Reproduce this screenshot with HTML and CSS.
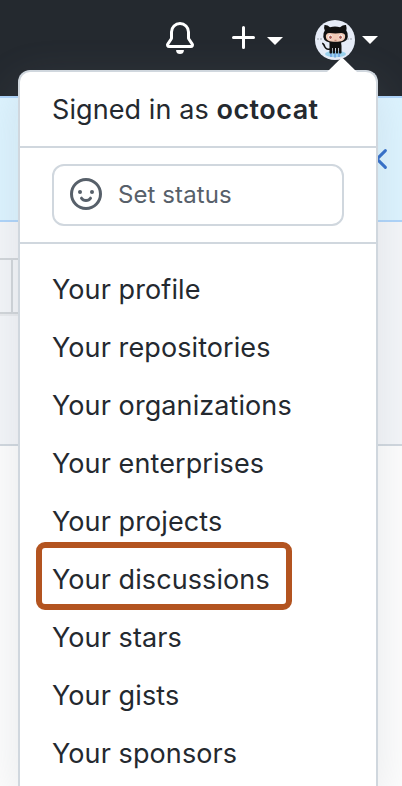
FILE: index.html
```html
<!DOCTYPE html>
<html lang="en">
<head>
<meta charset="utf-8">
<title>User menu</title>
<link rel="stylesheet" href="styles.css">
</head>
<body>
<header class="topbar">
  <svg class="icon bell" viewBox="0 0 16 16"><path d="M8 16a2 2 0 001.985-1.75c.017-.137-.097-.25-.235-.25h-3.5c-.138 0-.252.113-.235.25A2 2 0 008 16z"/><path fill-rule="evenodd" d="M8 1.500A3.500 3.500 0 004.500 5v2.947c0 .346-.102.683-.294.970l-1.703 2.556a.018.018 0 00-.003.010l.001.006c0 .002.002.004.004.006a.017.017 0 00.006.004l.007.001h10.964l.007-.001a.016.016 0 00.006-.004.016.016 0 00.004-.006l.001-.007a.017.017 0 00-.003-.010l-1.703-2.554a1.750 1.750 0 01-.294-.970V5A3.500 3.500 0 008 1.500zM3 5a5 5 0 0110 0v2.947c0 .050.015.098.042.139l1.703 2.555A1.518 1.518 0 0113.482 13H2.518a1.518 1.518 0 01-1.263-2.360l1.703-2.554A.250.250 0 003 7.947V5z"/></svg>
  <svg class="icon plus" viewBox="0 0 16 16"><path d="M7.75 2a.75.75 0 01.75.75V7h4.25a.75.75 0 110 1.500H8.500v4.250a.75.75 0 11-1.500 0V8.500H2.750a.75.75 0 010-1.500H7V2.750A.75.75 0 017.750 2z"/></svg>
  <span class="caret"></span>
  <svg class="avatar" viewBox="0 0 40 40">
    <circle cx="20" cy="20" r="20" fill="#e6ecf7"/>
    <path d="M2 19h6M32 19h6" stroke="#b3b9c4" stroke-width="1.300" stroke-dasharray="2 1"/>
    <ellipse cx="20.500" cy="34" rx="10.500" ry="3.300" fill="#9bd3ee"/>
    <path d="M16 33v4M20 33v4.500M24 33v4" stroke="#75a9e5" stroke-width="1.800"/>
    <path d="M15 29c-4 1-5-1-6-4-.500-1-1-1.500-1.800-1.700" fill="none" stroke="#111" stroke-width="1.700"/>
    <path d="M14.500 22h11.500l.5 4v7q-1.500 1-2.500 0v-5h-.8v5q-1.200 1-2.300 0v-5h-.9v5q-1.200 1-2.300 0v-5h-.7v5q-1.500 1-2.500 0V26z" fill="#111"/>
    <path d="M9.500 5q3-.300 5.500 2.200 5-1.200 10 0Q28 4.700 31 5q1 3 .3 5.500 2 2.500 1.500 6.500-.800 6-12.300 6T8.300 17q-.500-4 1.500-6.500Q8.500 8 9.500 5z" fill="#111"/>
    <path d="M14.500 13q6 .8 12 0c3 .1 4 2 3.600 4-.4 3.500-3.200 4.700-9.600 4.700s-9.200-1.200-9.600-4.700c-.3-2.200.8-3.900 3.600-4z" fill="#f2cbb7"/>
    <ellipse cx="15.300" cy="17" rx="2" ry="2.500" fill="#fff"/>
    <ellipse cx="25.700" cy="17" rx="2" ry="2.500" fill="#fff"/>
    <ellipse cx="15.500" cy="17.200" rx="1.300" ry="1.800" fill="#a85b52"/>
    <ellipse cx="25.500" cy="17.200" rx="1.300" ry="1.800" fill="#a85b52"/>
    <path d="M19.500 20.300h2" stroke="#a85b52" stroke-width=".700"/>
  </svg>
  <span class="caret account-caret"></span>
</header>
<section class="banner">
  <svg class="close" viewBox="0 0 16 16"><path d="M3.800 3.800l8.400 8.400M12.200 3.800l-8.400 8.400"/></svg>
</section>
<section class="subhead"><div class="toolbar"><span class="toolbar-cell"></span></div></section>
<main class="content"></main>

<nav class="menu">
  <svg class="pointer" viewBox="0 0 30 14"><path d="M0 14 13.500.700q1.500-1.200 3 0L30 14z"/></svg>
  <div class="signed-in"><span class="who">Signed in as <strong>octocat</strong></span></div>
  <div class="status">
    <div class="status-box">
      <svg class="smiley" viewBox="0 0 16 16"><circle cx="8" cy="8" r="7.250"/><path d="M5.750 10.100Q6.500 11.250 8 11.250T10.250 10.100"/><circle class="eye" cx="5" cy="7" r="1"/><circle class="eye" cx="11" cy="7" r="1"/></svg>
      <span class="status-label">Set status</span>
    </div>
  </div>
  <div class="links">
    <a class="link"><span>Your profile</span></a>
    <a class="link"><span>Your repositories</span></a>
    <a class="link"><span>Your organizations</span></a>
    <a class="link"><span>Your enterprises</span></a>
    <a class="link"><span>Your projects</span></a>
    <a class="link highlighted"><span>Your discussions</span></a>
    <a class="link"><span>Your stars</span></a>
    <a class="link"><span>Your gists</span></a>
    <a class="link"><span>Your sponsors</span></a>
  </div>
</nav>
</body>
</html>
```
FILE: styles.css
```css
*, *::before, *::after { box-sizing: border-box; }
body {
  margin: 0;
  height: 786px;
  position: relative;
  overflow: hidden;
  display: flex;
  flex-direction: column;
  background: #fdfdfd;
  font-family: Inter, "Liberation Sans", sans-serif;
  font-size: 27px;
  font-weight: 420;
  letter-spacing: .09px;
  color: #24292f;
}
.topbar {
  flex: 0 0 96px;
  display: flex;
  align-items: flex-start;
  padding: 20px 0 0 164px;
  background: #24292f;
}
.icon { width: 32px; height: 32px; fill: #fff; margin-top: 2px; }
.plus { margin-left: 32px; }
.caret {
  width: 0;
  margin: 17px 0 0 7px;
  border: 8px solid transparent;
  border-top-color: #fff;
  border-bottom: 0;
}
.avatar { width: 40px; height: 40px; margin-left: 32px; }
.account-caret { margin-top: 16px; }
.banner {
  flex: 0 0 126px;
  display: flex;
  justify-content: flex-end;
  padding: 45px 9px 0 0;
  background: #ddf4ff;
  border: solid #aed4fa;
  border-width: 2px 0;
}
.close { width: 32px; height: 32px; fill: none; stroke: #316dca; stroke-width: 1.5; stroke-linecap: round; }
.subhead {
  flex: 0 0 224px;
  padding-top: 36px;
  background: #f4f6f9;
  border-bottom: 2px solid #d0d7de;
}
.toolbar {
  display: flex;
  width: 200px;
  height: 56px;
  border: solid #d1d5d9;
  border-width: 2px 0;
  box-shadow: 0 2px 0 #e9ebee;
}
.toolbar-cell { width: 13px; border-right: 2px solid #d1d5d9; }
.content { flex: 1; }
.menu {
  position: absolute;
  left: 18px;
  top: 70px;
  width: 360px;
  height: 716px;
  background: #fff;
  border: 2px solid #d0d7de;
  border-bottom: 0;
  border-radius: 12px 12px 0 0;
  box-shadow: 0 16px 48px rgba(140, 149, 159, .2);
}
.pointer { position: absolute; top: -14px; left: 307px; width: 30px; height: 14px; fill: #fff; }
.signed-in {
  height: 76px;
  padding: 0 32px;
  display: flex;
  align-items: center;
  border-bottom: 2px solid #d0d7de;
  white-space: pre;
}
strong { font-weight: 620; letter-spacing: .45px; }
.status { height: 96px; padding: 16px 32px; border-bottom: 2px solid #d0d7de; }
.status-box {
  height: 62px;
  display: flex;
  align-items: center;
  gap: 16px;
  padding: 0 16px;
  border: 2px solid #d0d7de;
  border-radius: 12px;
  color: #57606a;
  font-size: 24px;
}
.status-label { margin-top: -2px; }
.smiley { width: 32px; height: 32px; margin-top: -2px; fill: none; stroke: #57606a; stroke-width: 1.5; stroke-linecap: round; }
.eye { fill: #57606a; stroke: none; }
.links { padding-top: 16px; }
.link { position: relative; display: flex; align-items: center; height: 58px; padding: 0 32px; white-space: nowrap; }
.highlighted::after {
  content: "";
  position: absolute;
  left: 16px;
  top: -8px;
  width: 256px;
  height: 68px;
  border: 6px solid #b35420;
  border-radius: 9px;
}
```
